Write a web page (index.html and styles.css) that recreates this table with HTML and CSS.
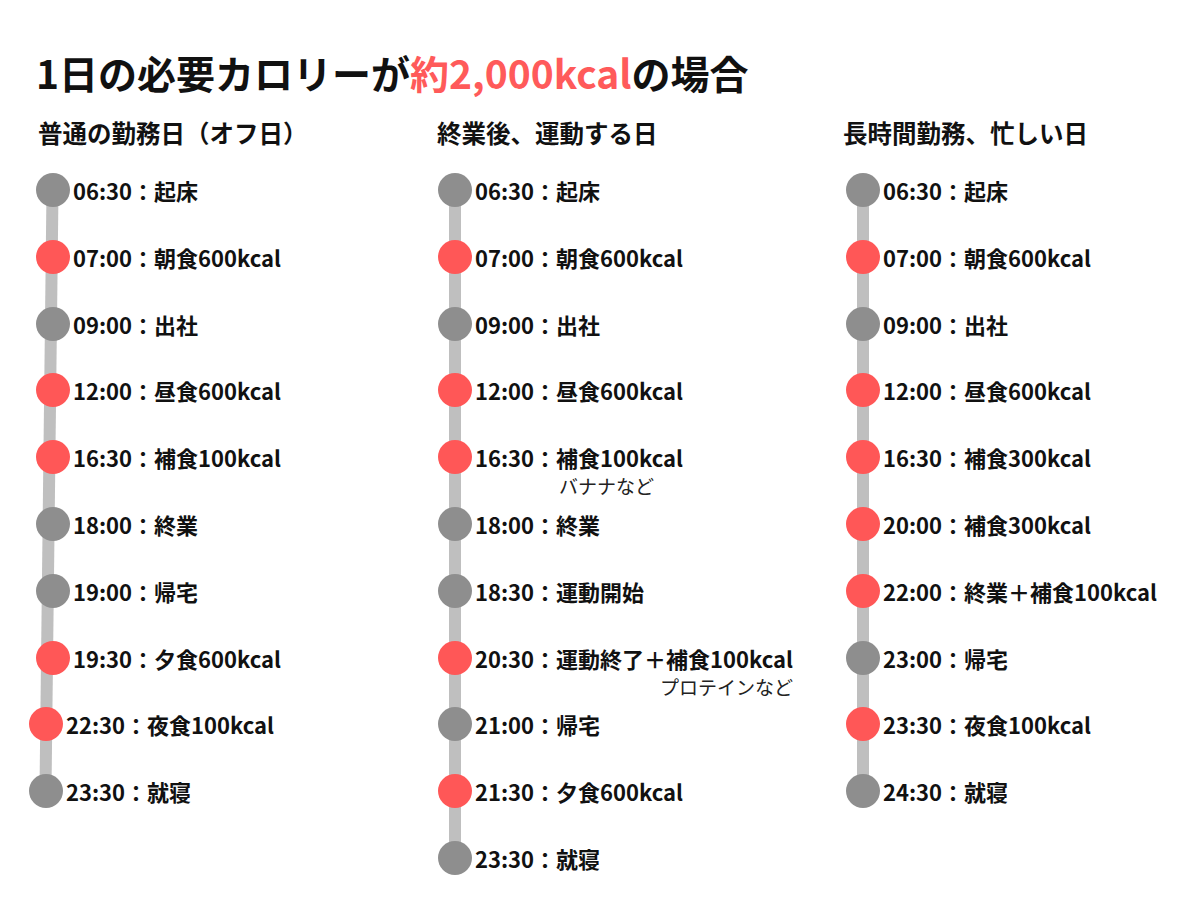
FILE: index.html
```html
<!DOCTYPE html>
<html lang="ja">
<head>
<meta charset="utf-8">
<link rel="stylesheet" href="styles.css">
</head>
<body>
<div class="page">
  <h1 class="title">1日の必要カロリーが<span class="accent">約2,000kcal</span>の場合</h1>
  <div class="columns">
    <section class="col col-1">
      <h2 class="heading">普通の勤務日（オフ日）</h2>
      <div class="timeline timeline-slant">
        <div class="row"><span class="dot gray"></span><div class="text"><div class="main">06:30：起床</div></div></div>
        <div class="row"><span class="dot red"></span><div class="text"><div class="main">07:00：朝食600kcal</div></div></div>
        <div class="row"><span class="dot gray"></span><div class="text"><div class="main">09:00：出社</div></div></div>
        <div class="row"><span class="dot red"></span><div class="text"><div class="main">12:00：昼食600kcal</div></div></div>
        <div class="row"><span class="dot red"></span><div class="text"><div class="main">16:30：補食100kcal</div></div></div>
        <div class="row"><span class="dot gray"></span><div class="text"><div class="main">18:00：終業</div></div></div>
        <div class="row"><span class="dot gray"></span><div class="text"><div class="main">19:00：帰宅</div></div></div>
        <div class="row"><span class="dot red"></span><div class="text"><div class="main">19:30：夕食600kcal</div></div></div>
        <div class="row row-shift"><span class="dot red"></span><div class="text"><div class="main">22:30：夜食100kcal</div></div></div>
        <div class="row row-shift"><span class="dot gray"></span><div class="text"><div class="main">23:30：就寝</div></div></div>
      </div>
    </section>
    <section class="col col-2">
      <h2 class="heading">終業後、運動する日</h2>
      <div class="timeline">
        <div class="row"><span class="dot gray"></span><div class="text"><div class="main">06:30：起床</div></div></div>
        <div class="row"><span class="dot red"></span><div class="text"><div class="main">07:00：朝食600kcal</div></div></div>
        <div class="row"><span class="dot gray"></span><div class="text"><div class="main">09:00：出社</div></div></div>
        <div class="row"><span class="dot red"></span><div class="text"><div class="main">12:00：昼食600kcal</div></div></div>
        <div class="row"><span class="dot red"></span><div class="text"><div class="main">16:30：補食100kcal</div><div class="sub sub-indent">バナナなど</div></div></div>
        <div class="row"><span class="dot gray"></span><div class="text"><div class="main">18:00：終業</div></div></div>
        <div class="row"><span class="dot gray"></span><div class="text"><div class="main">18:30：運動開始</div></div></div>
        <div class="row"><span class="dot red"></span><div class="text"><div class="main">20:30：運動終了＋補食100kcal</div><div class="sub sub-right">プロテインなど</div></div></div>
        <div class="row"><span class="dot gray"></span><div class="text"><div class="main">21:00：帰宅</div></div></div>
        <div class="row"><span class="dot red"></span><div class="text"><div class="main">21:30：夕食600kcal</div></div></div>
        <div class="row"><span class="dot gray"></span><div class="text"><div class="main">23:30：就寝</div></div></div>
      </div>
    </section>
    <section class="col col-3">
      <h2 class="heading">長時間勤務、忙しい日</h2>
      <div class="timeline">
        <div class="row"><span class="dot gray"></span><div class="text"><div class="main">06:30：起床</div></div></div>
        <div class="row"><span class="dot red"></span><div class="text"><div class="main">07:00：朝食600kcal</div></div></div>
        <div class="row"><span class="dot gray"></span><div class="text"><div class="main">09:00：出社</div></div></div>
        <div class="row"><span class="dot red"></span><div class="text"><div class="main">12:00：昼食600kcal</div></div></div>
        <div class="row"><span class="dot red"></span><div class="text"><div class="main">16:30：補食300kcal</div></div></div>
        <div class="row"><span class="dot red"></span><div class="text"><div class="main">20:00：補食300kcal</div></div></div>
        <div class="row"><span class="dot red"></span><div class="text"><div class="main">22:00：終業＋補食100kcal</div></div></div>
        <div class="row"><span class="dot gray"></span><div class="text"><div class="main">23:00：帰宅</div></div></div>
        <div class="row"><span class="dot red"></span><div class="text"><div class="main">23:30：夜食100kcal</div></div></div>
        <div class="row"><span class="dot gray"></span><div class="text"><div class="main">24:30：就寝</div></div></div>
      </div>
    </section>
  </div>
</div>
</body>
</html>
```
FILE: styles.css
```css
html, body {
  margin: 0;
  padding: 0;
  background: #ffffff;
}
body {
  font-family: "Noto Sans CJK JP", "Noto Sans", sans-serif;
  color: #111111;
}
.page {
  width: 1200px;
  height: 900px;
  padding: 47px 0 0 36px;
  box-sizing: border-box;
  overflow: hidden;
}
.title {
  margin: 0;
  font-size: 39px;
  line-height: 50px;
  font-weight: 700;
  letter-spacing: 0;
}
.accent {
  color: #ff5a5a;
}
.columns {
  display: grid;
  grid-template-columns: 399px 406px 1fr;
  margin-top: 19px;
}
.heading {
  margin: 0 0 0 2px;
  font-size: 24.5px;
  line-height: 34px;
  font-weight: 700;
}
.timeline {
  position: relative;
  margin-top: 23px;
  display: flex;
  flex-direction: column;
}
.col-2 .timeline {
  margin-left: 3px;
}
.col-3 .timeline {
  margin-left: 5px;
}
.timeline::before {
  content: "";
  position: absolute;
  left: 11px;
  width: 12px;
  top: 17px;
  bottom: 17px;
  background: #bfbfbf;
}
.timeline-slant::before {
  left: 7px;
  transform: rotate(0.67deg);
}
.row {
  position: relative;
  display: flex;
  align-items: flex-start;
  height: 66.8px;
}
.row:last-child {
  height: 34px;
}
.row-shift {
  margin-left: -7px;
}
.dot {
  flex: none;
  width: 34px;
  height: 34px;
  border-radius: 50%;
  position: relative;
}
.dot.gray {
  background: #8e8e8e;
}
.dot.red {
  background: #ff5757;
}
.text {
  display: inline-flex;
  flex-direction: column;
  margin-left: 3px;
}
.main {
  font-size: 22px;
  line-height: 34px;
  font-weight: 700;
  white-space: nowrap;
}
.sub {
  font-size: 19px;
  line-height: 24px;
  font-weight: 400;
  color: #222222;
  white-space: nowrap;
}
.sub-indent {
  padding-left: 84px;
}
.sub-right {
  text-align: right;
}
```
